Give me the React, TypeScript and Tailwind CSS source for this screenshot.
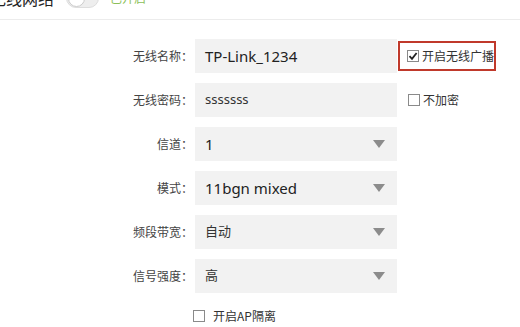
const font = { fontFamily: '"Noto Sans", "Noto Sans CJK SC", sans-serif' };
const cjk = { fontFamily: '"Noto Sans CJK SC", sans-serif' };

function Box({ checked }: { checked?: boolean }) {
  return (
    <span className="flex h-[12px] w-[12px] items-center justify-center border border-[#8a8a8a] bg-white">
      {checked && (
        <svg width="10" height="10" viewBox="0 0 10 10">
          <path d="M1.5 5.2 L4 7.8 L8.6 2" fill="none" stroke="#222" strokeWidth="1.8" />
        </svg>
      )}
    </span>
  );
}

function Row({
  label,
  value,
  select,
  small,
  children,
}: {
  label: string;
  value: string;
  select?: boolean;
  small?: boolean;
  children?: React.ReactNode;
}) {
  return (
    <div className="flex h-[34px] items-center">
      <div className="w-[195px] shrink-0 pr-[2px] text-right text-[12px] text-[#444]" style={cjk}>
        {label}
      </div>
      <div className="flex h-[34px] w-[202px] shrink-0 items-center justify-between bg-[#f2f2f2] pl-[10px] pr-[12px]">
        <span className={small ? "text-[13px] text-[#333]" : "text-[15px] text-[#222]"}>{value}</span>
        {select && (
          <svg width="12" height="8" viewBox="0 0 12 8">
            <path d="M0 0 H12 L6 8 Z" fill="#8c8c8c" />
          </svg>
        )}
      </div>
      {children}
    </div>
  );
}

export default function App() {
  return (
    <div className="h-[327px] w-[520px] overflow-hidden bg-white" style={font}>
      <div className="flex h-[20px] items-start border-b border-[#ececec]">
        <div className="-mt-[14px] flex items-center">
          <span className="-ml-[10px] text-[16px] text-[#222]" style={cjk}>
            无线网络
          </span>
          <span className="ml-[12px] h-[20px] w-[33px] rounded-full border border-[#ddd] bg-[#eee] p-[1px]">
            <span className="block h-[17px] w-[17px] rounded-full border border-[#ccc] bg-white" />
          </span>
          <span className="ml-[11px] text-[12px] text-[#8cbf5a]" style={cjk}>
            已开启
          </span>
        </div>
      </div>
      <div className="flex flex-col gap-[10px] pt-[19px]">
        <Row label="无线名称：" value="TP-Link_1234">
          <div
            className="ml-[1px] flex h-[30px] w-[98px] items-center gap-[3px] border-2 border-[#c0392b] pl-[7px] text-[12px] text-[#333]"
            style={cjk}
          >
            <Box checked />
            <span>开启无线广播</span>
          </div>
        </Row>
        <Row label="无线密码：" value="sssssss" small>
          <div className="ml-[11px] flex items-center gap-[3px] text-[12px] text-[#333]" style={cjk}>
            <Box />
            <span>不加密</span>
          </div>
        </Row>
        <Row label="信道：" value="1" select />
        <Row label="模式：" value="11bgn mixed" select />
        <Row label="频段带宽：" value="自动" select small />
        <Row label="信号强度：" value="高" select small />
      </div>
      <div className="mt-[14px] flex items-center gap-[8px] pl-[193px] text-[12px] text-[#333]" style={cjk}>
        <Box />
        <span>开启AP隔离</span>
      </div>
    </div>
  );
}
